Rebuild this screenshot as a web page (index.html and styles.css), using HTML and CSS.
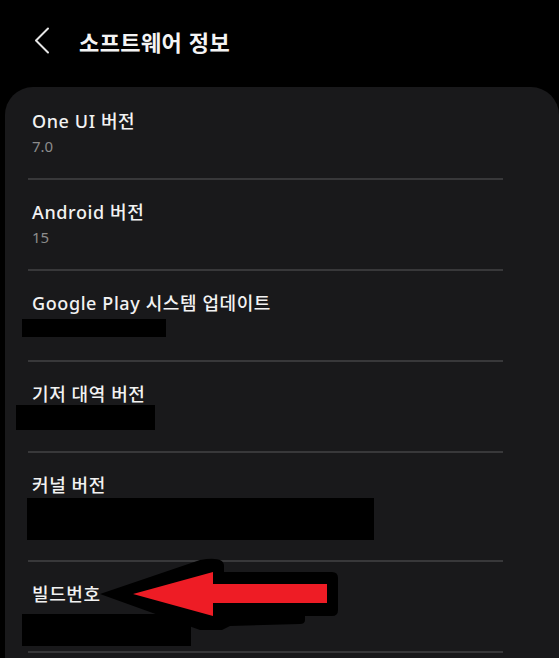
FILE: index.html
```html
<!DOCTYPE html>
<html lang="ko">
<head>
<meta charset="utf-8">
<title>소프트웨어 정보</title>
<link rel="stylesheet" href="styles.css">
</head>
<body>
<div class="screen">
  <header class="appbar">
    <svg class="back" width="16" height="28" viewBox="0 0 16 28" aria-hidden="true">
      <path d="M14 1.5 L2 13.5 L14 25.5" fill="none" stroke="#e6e6e6" stroke-width="2" stroke-linecap="round" stroke-linejoin="round"/>
    </svg>
    <h1 class="appbar-title">소프트웨어 정보</h1>
  </header>

  <section class="card">
    <div class="row">
      <div class="row-title">One UI 버전</div>
      <div class="row-sub">7.0</div>
    </div>
    <div class="row">
      <div class="row-title">Android 버전</div>
      <div class="row-sub">15</div>
    </div>
    <div class="row">
      <div class="row-title">Google Play 시스템 업데이트</div>
      <div class="redact redact-gp"></div>
    </div>
    <div class="row">
      <div class="row-title">기저 대역 버전</div>
      <div class="redact redact-bb"></div>
    </div>
    <div class="row row-tall">
      <div class="row-title">커널 버전</div>
      <div class="redact redact-kn"></div>
    </div>
    <div class="row">
      <div class="row-title">빌드번호</div>
      <div class="redact redact-bn"></div>
    </div>
  </section>

  <svg class="arrow" width="250" height="80" viewBox="0 0 250 80" aria-hidden="true">
    <path d="M0 36 L100 2 Q124 -2 124 8 L124 14 L232 14 Q238 14 238 20 L238 52 Q238 58 232 58 L205 58 L205 62 Q205 66 200 66 L130 68 L122 72 L100 72 Z" fill="#000"/>
    <polygon points="33,36 113,14 113,26 227,26 227,45 113,45 113,58" fill="#ee1c25"/>
  </svg>
</div>
</body>
</html>
```

FILE: styles.css
```css
* { box-sizing: border-box; }

html, body {
  margin: 0;
  padding: 0;
  background: #000;
}

body {
  font-family: "Noto Sans", "Noto Sans CJK KR", sans-serif;
  color: #f2f2f2;
  width: 559px;
  height: 658px;
  overflow: hidden;
}

.screen {
  position: relative;
  height: 658px;
}

.appbar {
  display: flex;
  align-items: center;
  height: 87px;
  padding: 0 0 6px 34px;
}

.back {
  display: block;
  margin-right: 29px;
}

.appbar-title {
  margin: 0;
  font-family: "Noto Sans CJK KR", sans-serif;
  font-size: 22px;
  font-weight: 700;
  letter-spacing: 0.4px;
  color: #f4f4f4;
}

.card {
  margin-left: 5px;
  background: #19191b;
  border-radius: 28px 28px 0 0;
  padding-top: 2px;
  height: 571px;
}

.row {
  margin: 0 56px 0 23px;
  height: 91px;
  padding: 20px 0 0 4px;
  border-bottom: 2px solid #38383a;
}

.row-tall { height: 109px; }

.row-title {
  font-size: 18px;
  line-height: 24px;
  font-weight: 500;
  letter-spacing: 0.6px;
  color: #f2f2f2;
}

.row-sub {
  margin-top: 3px;
  font-size: 15px;
  line-height: 20px;
  color: #8c8c8c;
}

.redact { background: #000; }

.redact-gp { margin: 4px 0 0 -10px; width: 144px; height: 18px; }
.redact-bb { margin: -1px 0 0 -16px; width: 139px; height: 25px; }
.redact-kn { margin: 1px 0 0 -5px; width: 347px; height: 42px; }
.redact-bn { margin: 8px 0 0 -10px; width: 169px; height: 32px; }

.arrow {
  position: absolute;
  left: 100px;
  top: 558px;
}
```
